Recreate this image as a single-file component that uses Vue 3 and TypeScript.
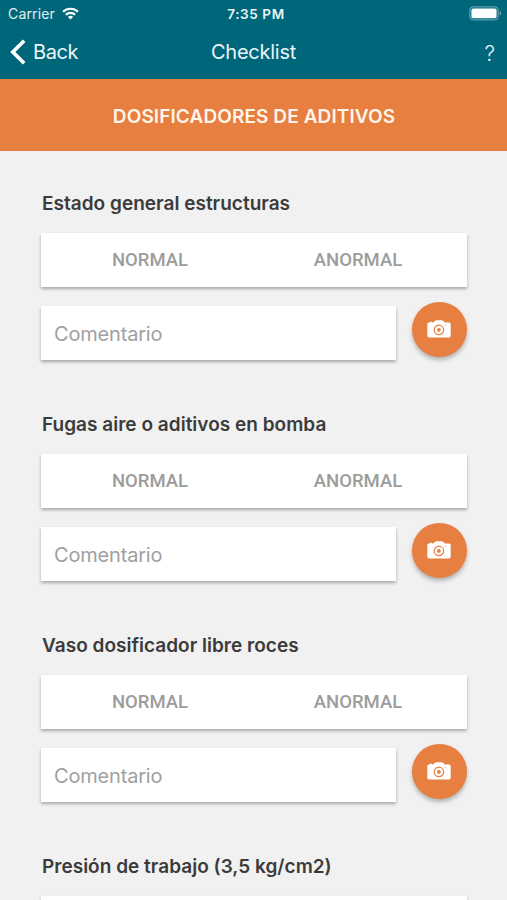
<script setup lang="ts">
import { ref } from 'vue'

interface ChecklistItem {
  title: string
  comment: string
}

const items = ref<ChecklistItem[]>([
  { title: 'Estado general estructuras', comment: '' },
  { title: 'Fugas aire o aditivos en bomba', comment: '' },
  { title: 'Vaso dosificador libre roces', comment: '' },
  { title: 'Presión de trabajo (3,5 kg/cm2)', comment: '' },
])
const options: string[] = ['NORMAL', 'ANORMAL']
</script>

<template>
  <div class="screen">
    <header class="top">
      <div class="status">
        <div class="carrier">
          <span class="carrier-name">Carrier</span>
          <svg class="wifi" width="17" height="13" viewBox="0 0 17 13" fill="none" stroke="#fff" stroke-width="2.2">
            <path d="M1 4.8a10.7 10.7 0 0 1 15 0" />
            <path d="M3.8 7.8a6.7 6.7 0 0 1 9.4 0" />
            <path d="M8.5 12.6 5.9 10a3.7 3.7 0 0 1 5.2 0z" fill="#fff" stroke="none" />
          </svg>
        </div>
        <span class="time">7:35 PM</span>
        <svg class="battery" width="33" height="15" viewBox="0 0 33 15">
          <rect x="0.8" y="0.8" width="28.4" height="13" rx="3.6" fill="none" stroke="#5b9fad" stroke-width="1.3" />
          <rect x="2.4" y="2.4" width="25.2" height="9.8" rx="1.8" fill="#fff" />
          <path d="M30.7 5v4.6c1.8-.6 1.8-4 0-4.6z" fill="#7fb3be" />
        </svg>
      </div>
      <nav class="nav">
        <button class="back" type="button">
          <svg width="16" height="26" viewBox="0 0 16 26" fill="none" stroke="#fff" stroke-width="3.7">
            <path d="M14.2 1.7 2.8 13l11.4 11.3" />
          </svg>
          <span class="back-label">Back</span>
        </button>
        <span class="nav-title">Checklist</span>
        <button class="help" type="button">?</button>
      </nav>
    </header>

    <div class="banner"><span class="banner-text">DOSIFICADORES DE ADITIVOS</span></div>

    <main class="list">
      <section v-for="item in items" :key="item.title" class="item">
        <h2 class="item-title">{{ item.title }}</h2>
        <div class="segment">
          <button v-for="option in options" :key="option" class="option" type="button">{{ option }}</button>
        </div>
        <div class="comment-row">
          <input v-model="item.comment" class="comment" type="text" placeholder="Comentario" />
          <button class="camera" type="button">
            <svg width="24" height="18" viewBox="0 0 24 18">
              <path d="M2 2.5h.6v-.7h2.6v.7h1L8 .7Q8.5.2 9.3.2h5.6q.7 0 1.2.5l1.8 1.8H22q1.7 0 1.7 1.7v11.6q0 1.8-1.7 1.8H2Q.3 17.6.3 15.8V4.2Q.3 2.5 2 2.5z" fill="#fff" />
              <circle cx="11.9" cy="9.9" r="4.7" fill="none" stroke="#e67f3f" stroke-width="1.2" />
              <circle cx="11.9" cy="9.9" r="1.9" fill="#e67f3f" />
              <circle cx="18.4" cy="5.2" r=".7" fill="#f3bd99" />
            </svg>
          </button>
        </div>
      </section>
    </main>
  </div>
</template>

<style>
body {
  background: #f1f1f1;
  overflow: hidden;
}
</style>

<style scoped>
.screen {
  height: 900px;
  overflow: hidden;
  background: #f1f1f1;
  font-family: Inter, Roboto, sans-serif;
  color: #3b3b3b;
}
button {
  border: 0;
  padding: 0;
  background: none;
  color: inherit;
  font: inherit;
}
svg {
  display: block;
}
.top {
  height: 79px;
  background: #00677b;
  color: #fff;
}
.status {
  display: grid;
  grid-template-columns: 1fr auto 1fr;
  align-items: center;
  height: 27px;
  padding: 0 5px 0 8px;
}
.carrier {
  display: flex;
  align-items: center;
  gap: 7px;
}
.carrier-name {
  font-size: 14px;
  letter-spacing: 0.16px;
  color: #e0f0f3;
}
.wifi {
  margin-bottom: 1px;
}
.time {
  font-size: 13.5px;
  font-weight: 600;
  letter-spacing: 0.6px;
  margin-left: 2px;
  color: #e8f6f8;
}
.battery {
  justify-self: end;
}
.nav {
  display: grid;
  grid-template-columns: 1fr auto 1fr;
  align-items: center;
  height: 50px;
  padding: 0 12px 0 10px;
  font-size: 20px;
  letter-spacing: -0.25px;
  color: #e8f6f8;
}
.nav-title {
  padding-left: 2px;
}
.back {
  display: flex;
  align-items: center;
  gap: 7px;
  letter-spacing: -0.4px;
}
.help {
  justify-self: end;
  padding-top: 2px;
  font-size: 21px;
  font-weight: 300;
}
.banner {
  display: flex;
  align-items: center;
  justify-content: center;
  height: 72px;
  padding: 2px 0 0 1px;
  box-sizing: border-box;
  background: #e67f3f;
  color: #fff5ea;
  font-size: 19px;
  font-weight: 600;
  letter-spacing: 0.1px;
}
.list {
  display: flex;
  flex-direction: column;
  gap: 53px;
  padding: 41px 40px 0 41px;
}
.item-title {
  margin: 0 0 17px 1px;
  font-size: 19px;
  line-height: 24px;
  font-weight: 600;
  letter-spacing: 0.02px;
  white-space: nowrap;
}
.segment {
  display: flex;
  height: 54px;
  padding: 0 5px;
  box-sizing: border-box;
  margin-bottom: 15px;
  background: #fff;
  box-shadow: 0 2px 3px rgba(0, 0, 0, 0.3);
}
.option {
  flex: 1;
  font-family: Roboto, sans-serif;
  font-size: 18.5px;
  font-weight: 500;
  color: #9c9c9c;
}
.comment-row {
  display: flex;
  align-items: flex-end;
  justify-content: space-between;
  height: 58px;
}
.comment {
  width: 355px;
  height: 54px;
  padding: 1px 13px 0;
  box-sizing: border-box;
  border: 0;
  border-radius: 0;
  outline: 0;
  background: #fff;
  box-shadow: 0 2px 3px rgba(0, 0, 0, 0.3);
  font: 400 20px Inter, Roboto, sans-serif;
  letter-spacing: -0.18px;
  color: #3b3b3b;
}
.comment::placeholder {
  color: #a0a0a0;
  opacity: 1;
}
.camera {
  display: flex;
  align-items: center;
  justify-content: center;
  align-self: flex-start;
  width: 55px;
  height: 55px;
  padding: 0 1px 2px 0;
  box-sizing: border-box;
  border-radius: 50%;
  background: #e67f3f;
  box-shadow: 0 3px 4px rgba(0, 0, 0, 0.26);
}
</style>
